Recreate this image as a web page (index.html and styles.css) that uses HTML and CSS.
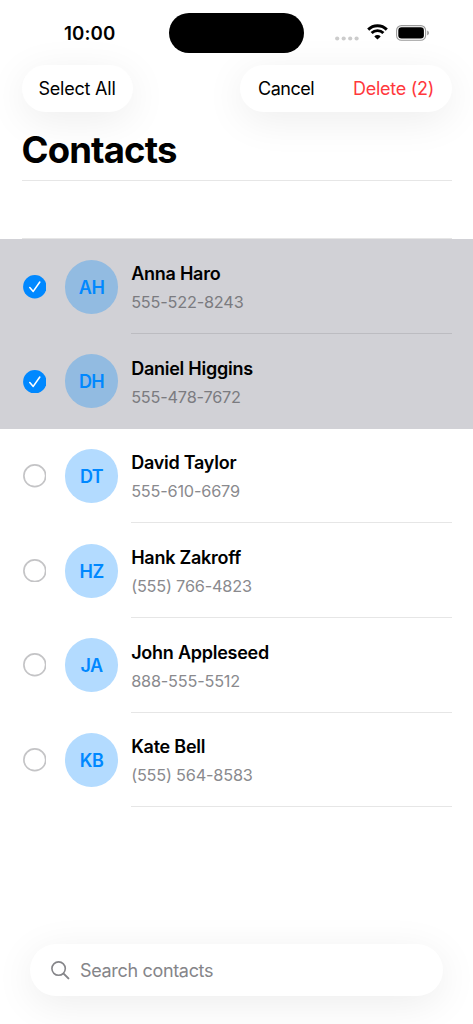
FILE: index.html
```
<!DOCTYPE html>
<html lang="en">
<head>
<meta charset="utf-8">
<title>Contacts</title>
<link rel="stylesheet" href="styles.css">
</head>
<body>
<div class="screen">
  <header class="status">
    <div class="time"><span>10:00</span></div>
    <div class="island"></div>
    <div class="indicators">
      <svg class="dots" width="24" height="5" viewBox="0 0 24 5" fill="#ccc"><circle cx="2.2" cy="2.5" r="2.1"/><circle cx="8.7" cy="2.5" r="2.1"/><circle cx="15.2" cy="2.5" r="2.1"/><circle cx="21.6" cy="2.5" r="2.1"/></svg>
      <svg class="wifi" width="21" height="16" viewBox="0 0 21 16" fill="none" stroke="#000" stroke-width="2.9"><path d="M1.2 5.6a13.2 13.2 0 0 1 18.6 0"/><path d="M4.6 9.1a8.3 8.3 0 0 1 11.8 0"/><path d="M10.5 15.6 7.3 12.4a4.5 4.5 0 0 1 6.4 0Z" fill="#000" stroke="none"/></svg>
      <svg class="battery" width="34" height="16" viewBox="0 0 34 16"><rect x=".6" y=".6" width="29" height="14.6" rx="4.8" fill="none" stroke="#999" stroke-width="1.1"/><rect x="2.3" y="2.3" width="25.6" height="11.2" rx="3.2" fill="#000"/><path d="M31.2 5.5c2.3.8 2.3 4 0 4.8Z" fill="#999"/></svg>
    </div>
  </header>
  <nav class="toolbar">
    <div class="pill pill-left"><span class="select-all">Select All</span></div>
    <div class="pill pill-right"><span class="cancel">Cancel</span><span class="delete">Delete (2)</span></div>
  </nav>
  <h1 class="title"><span>Contacts</span></h1>
  <div class="list-gap"></div>
  <main class="list">
    <div class="row selected">
      <svg class="check" viewBox="0 0 24 24"><circle cx="12" cy="12" r="11.9" fill="#0088ff"/><path d="M6.9 12.8 10.4 16.7 17.1 7.2" fill="none" stroke="#fff" stroke-width="1.6" stroke-linecap="round" stroke-linejoin="round"/></svg>
      <div class="avatar">AH</div>
      <div class="info"><div class="name"><span>Anna Haro</span></div><div class="phone"><span>555-522-8243</span></div></div>
    </div>
    <div class="row selected">
      <svg class="check" viewBox="0 0 24 24"><circle cx="12" cy="12" r="11.9" fill="#0088ff"/><path d="M6.9 12.8 10.4 16.7 17.1 7.2" fill="none" stroke="#fff" stroke-width="1.6" stroke-linecap="round" stroke-linejoin="round"/></svg>
      <div class="avatar">DH</div>
      <div class="info last-selected"><div class="name"><span>Daniel Higgins</span></div><div class="phone"><span>555-478-7672</span></div></div>
    </div>
    <div class="row">
      <svg class="check" viewBox="0 0 24 24"><circle cx="12" cy="12" r="11.1" fill="none" stroke="#c4c4c6" stroke-width="1.7"/></svg>
      <div class="avatar">DT</div>
      <div class="info"><div class="name"><span>David Taylor</span></div><div class="phone"><span>555-610-6679</span></div></div>
    </div>
    <div class="row">
      <svg class="check" viewBox="0 0 24 24"><circle cx="12" cy="12" r="11.1" fill="none" stroke="#c4c4c6" stroke-width="1.7"/></svg>
      <div class="avatar">HZ</div>
      <div class="info"><div class="name"><span>Hank Zakroff</span></div><div class="phone"><span>(555) 766-4823</span></div></div>
    </div>
    <div class="row">
      <svg class="check" viewBox="0 0 24 24"><circle cx="12" cy="12" r="11.1" fill="none" stroke="#c4c4c6" stroke-width="1.7"/></svg>
      <div class="avatar">JA</div>
      <div class="info"><div class="name"><span>John Appleseed</span></div><div class="phone"><span>888-555-5512</span></div></div>
    </div>
    <div class="row">
      <svg class="check" viewBox="0 0 24 24"><circle cx="12" cy="12" r="11.1" fill="none" stroke="#c4c4c6" stroke-width="1.7"/></svg>
      <div class="avatar">KB</div>
      <div class="info"><div class="name"><span>Kate Bell</span></div><div class="phone"><span>(555) 564-8583</span></div></div>
    </div>
  </main>
  <footer class="search">
    <svg width="19" height="19" viewBox="0 0 19 19" fill="none" stroke="#858589" stroke-linecap="round"><circle cx="7.6" cy="7.6" r="6.7" stroke-width="1.6"/><path d="M12.6 12.6 17.4 17.4" stroke-width="2"/></svg>
    <span>Search contacts</span>
  </footer>
</div>
</body>
</html>
```
FILE: styles.css
```
* { box-sizing: border-box; }
body { margin: 0; background: #fff; font-family: Inter, "Liberation Sans", sans-serif; color: #000; }
.screen { width: 473px; height: 1024px; overflow: hidden; display: flex; flex-direction: column; white-space: nowrap; }
.status { height: 65px; flex: none; display: grid; grid-template-columns: 169px 135px 1fr; padding-top: 13px; }
.time { font-size: 18.7px; font-weight: 600; line-height: 41px; padding-left: 64px; letter-spacing: .1px; }
.island { height: 39.5px; border-radius: 20px; background: #000; }
.indicators { display: flex; align-items: flex-start; padding-left: 31px; }
.dots { margin-top: 22.5px; }
.wifi { margin: 11px 0 0 8px; }
.battery { margin: 11.7px 0 0 8px; }
.toolbar { height: 46.5px; flex: none; display: flex; justify-content: space-between; padding: 0 21.5px; }
.pill { height: 46.5px; border-radius: 24px; background: #fff; box-shadow: 0 8px 40px rgba(0,0,0,.075); display: flex; align-items: center; font-size: 18px; }
.pill-left { width: 111px; padding-left: 17px; }
.pill-right { width: 211.5px; padding-left: 18px; }
.select-all { letter-spacing: -.22px; }
.cancel { width: 95px; letter-spacing: -.5px; }
.delete { color: #ff383c; letter-spacing: -.28px; }
.title { margin: 0 21.5px; height: 69px; flex: none; border-bottom: 1px solid #e6e6e6; font-size: 36.5px; line-height: 76px; font-weight: 700; letter-spacing: -.85px; }
.list-gap { height: 58.9px; flex: none; margin: 0 21.5px; border-bottom: 1px solid #e6e6e6; }
.list { flex: 1; }
.row { height: 94.65px; display: flex; align-items: center; padding-left: 22.5px; }
.row.selected { background: #d1d1d6; }
.check { width: 23.6px; height: 23.6px; flex: none; }
.avatar { width: 53.8px; height: 53.8px; flex: none; margin-left: 18.6px; border-radius: 50%; background: #b3dbff; color: #0088ff; font-size: 18px; font-weight: 600; line-height: 55px; text-align: center; letter-spacing: -.5px; }
.selected .avatar { background: #92bbe1; }
.info { align-self: stretch; flex: 1; margin: 0 21.5px 0 12.7px; padding-top: 19.7px; border-bottom: 1px solid #e6e6e6; }
.selected .info { border-color: #bcbcc1; }
.selected .last-selected { border-color: transparent; }
.name { font-size: 18px; line-height: 29px; font-weight: 600; letter-spacing: -.25px; }
.phone { font-size: 16.3px; line-height: 28px; color: #8a8a8e; letter-spacing: -.2px; }
.selected .phone { color: #7b7b80; }
.search { height: 52px; flex: none; margin: 0 30px 28px; border-radius: 26px; background: #fff; box-shadow: 0 8px 40px rgba(0,0,0,.075); display: flex; align-items: center; padding-left: 21px; gap: 10px; font-size: 18px; color: #858589; letter-spacing: -.33px; }
```
